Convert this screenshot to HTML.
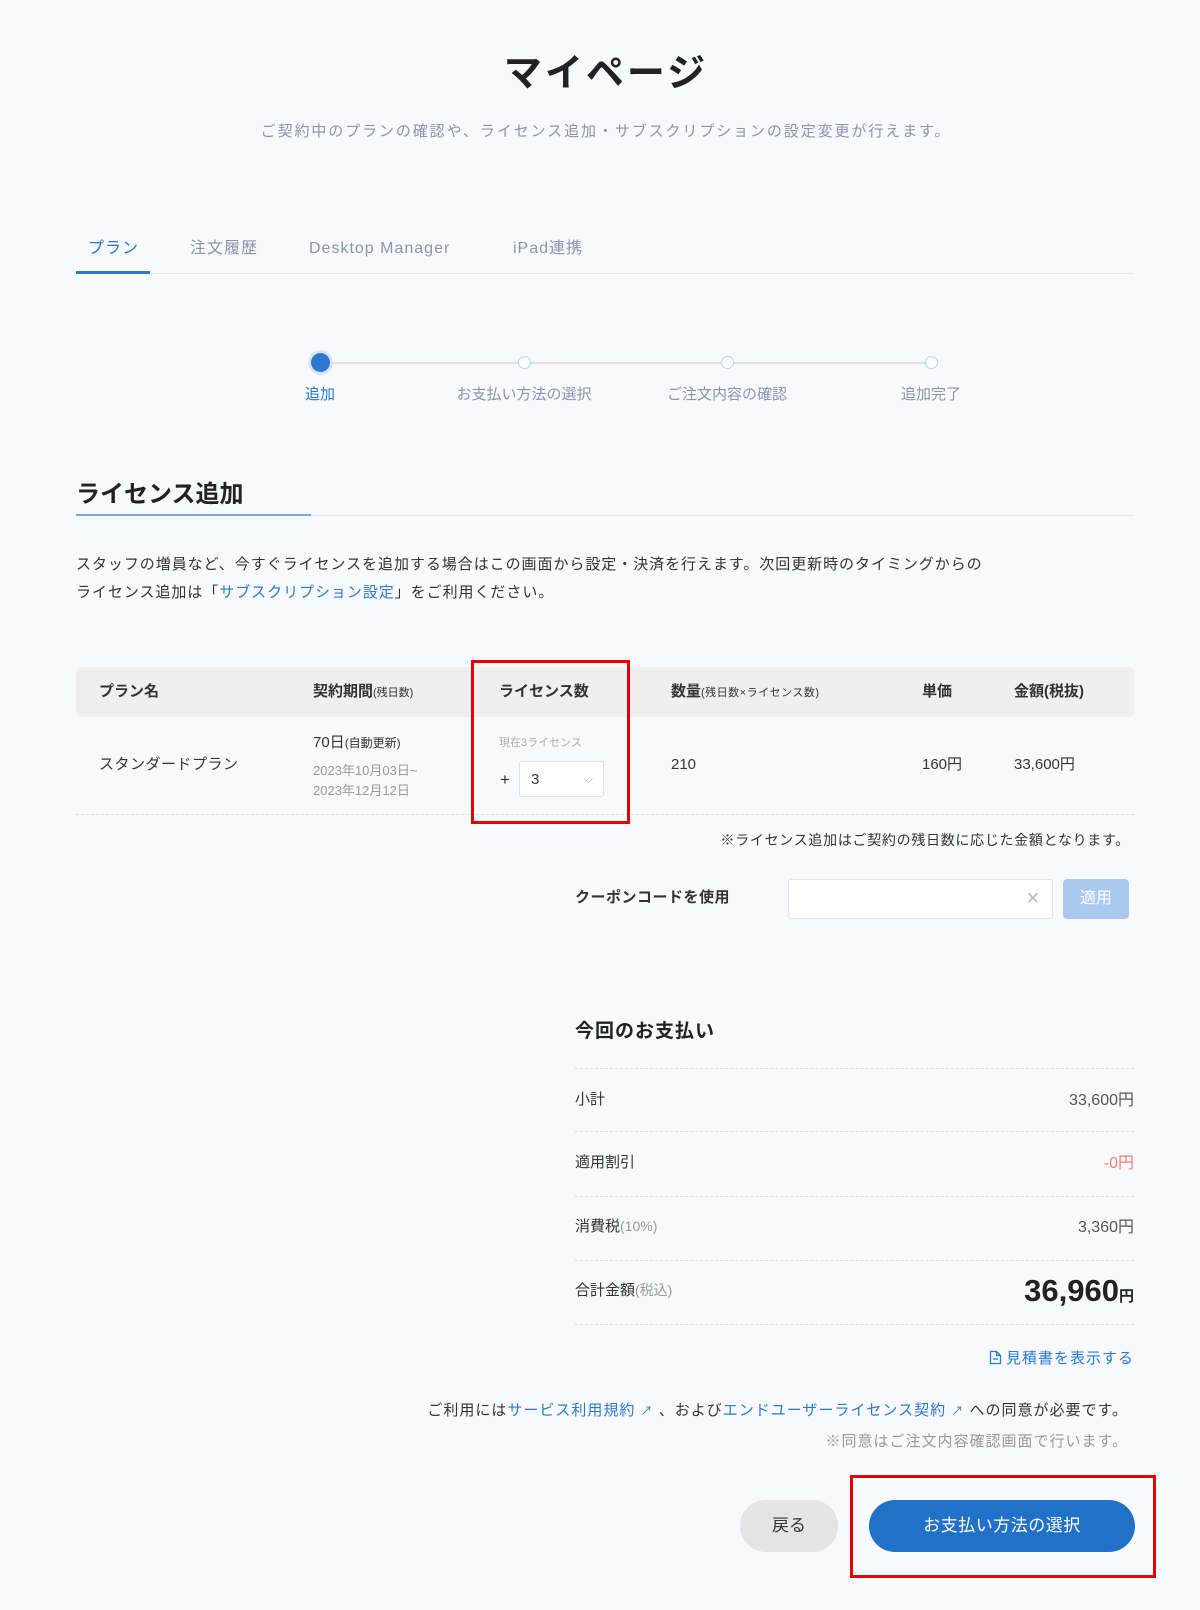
<!DOCTYPE html>
<html><head><meta charset="utf-8"><style>
*{margin:0;padding:0;box-sizing:border-box}
body{width:1200px;height:1610px;background:#f7f9fc;font-family:"Liberation Sans","Noto Sans CJK JP",sans-serif;color:#333;position:relative;overflow:hidden}
.a{position:absolute;white-space:nowrap;line-height:1.62}
.blue{color:#2a78cf}
.dot{position:absolute;border-top:1px dashed #dcdcdc}
</style></head><body>
<div class="a" style="left:0;width:1212px;top:44px;text-align:center;font-size:38px;font-weight:bold;color:#222;letter-spacing:3px">マイページ</div>
<div class="a" style="left:0;width:1212px;top:120px;text-align:center;font-size:15px;color:#8a95a8;letter-spacing:1.9px">ご契約中のプランの確認や、ライセンス追加・サブスクリプションの設定変更が行えます。</div>

<div class="a blue" style="left:88px;top:236px;font-size:16px;letter-spacing:1px">プラン</div>
<div class="a" style="left:190px;top:236px;font-size:16px;color:#8a95a8;letter-spacing:1px">注文履歴</div>
<div class="a" style="left:309px;top:236px;font-size:16px;color:#8a95a8;letter-spacing:1px">Desktop Manager</div>
<div class="a" style="left:513px;top:236px;font-size:16px;color:#8a95a8;letter-spacing:1px">iPad連携</div>
<div class="a" style="left:76px;top:273px;width:1058px;height:1px;background:#e3e7ee"></div>
<div class="a" style="left:76px;top:271px;width:74px;height:3px;background:#2a78cf"></div>

<div class="a" style="left:320px;top:362px;width:611px;height:2px;background:#e0e0e0"></div>
<div class="a" style="left:311px;top:353px;width:19px;height:19px;border-radius:50%;background:#2a78cf;box-shadow:0 0 0 3px #d6e6f7"></div>
<div class="a" style="left:518px;top:356px;width:13px;height:13px;border-radius:50%;background:#fff;border:1.5px solid #b8d2ef"></div>
<div class="a" style="left:721px;top:356px;width:13px;height:13px;border-radius:50%;background:#fff;border:1.5px solid #b8d2ef"></div>
<div class="a" style="left:925px;top:356px;width:13px;height:13px;border-radius:50%;background:#fff;border:1.5px solid #b8d2ef"></div>
<div class="a blue" style="left:280px;width:80px;text-align:center;top:383px;font-size:15px">追加</div>
<div class="a" style="left:444px;width:160px;text-align:center;top:383px;font-size:15px;color:#8a95a8">お支払い方法の選択</div>
<div class="a" style="left:647px;width:160px;text-align:center;top:383px;font-size:15px;color:#8a95a8">ご注文内容の確認</div>
<div class="a" style="left:871px;width:120px;text-align:center;top:383px;font-size:15px;color:#8a95a8">追加完了</div>

<div class="a" style="left:76px;top:476px;font-size:24px;font-weight:bold;color:#222">ライセンス追加</div>
<div class="a" style="left:76px;top:515px;width:1058px;height:1px;background:#e3e7ee"></div>
<div class="a" style="left:76px;top:514px;width:235px;height:2px;background:#7aa9de"></div>
<div class="a" style="left:76px;top:551px;font-size:15px;line-height:28px;color:#333;letter-spacing:0.95px">スタッフの増員など、今すぐライセンスを追加する場合はこの画面から設定・決済を行えます。次回更新時のタイミングからの<br>ライセンス追加は「<span class="blue">サブスクリプション設定</span>」をご利用ください。</div>

<div class="a" style="left:76px;top:667px;width:1058px;height:50px;background:#efefef;border-radius:6px"></div>
<div class="a" style="left:99px;top:680px;font-size:15px;font-weight:bold">プラン名</div>
<div class="a" style="left:313px;top:680px;font-size:15px;font-weight:bold">契約期間<span style="font-size:11px;font-weight:normal">(残日数)</span></div>
<div class="a" style="left:499px;top:680px;font-size:15px;font-weight:bold">ライセンス数</div>
<div class="a" style="left:671px;top:680px;font-size:15px;font-weight:bold">数量<span style="font-size:11px;font-weight:normal;letter-spacing:.5px">(残日数×ライセンス数)</span></div>
<div class="a" style="left:922px;top:680px;font-size:15px;font-weight:bold">単価</div>
<div class="a" style="left:1014px;top:680px;font-size:15px;font-weight:bold">金額(税抜)</div>

<div class="a" style="left:99px;top:753px;font-size:15px;letter-spacing:.5px">スタンダードプラン</div>
<div class="a" style="left:313px;top:731px;font-size:15px">70日<span style="font-size:12px">(自動更新)</span></div>
<div class="a" style="left:313px;top:761px;font-size:13px;color:#999;line-height:20px">2023年10月03日~<br>2023年12月12日</div>
<div class="a" style="left:499px;top:735px;font-size:11px;color:#aaa">現在3ライセンス</div>
<div class="a" style="left:500px;top:766px;font-size:17px">+</div>
<div class="a" style="left:519px;top:761px;width:85px;height:36px;background:#fff;border:1px solid #e0e0e0;border-radius:3px;font-size:15px;line-height:20px;padding:8px 11px">3<span style="position:absolute;right:10px;top:7px;color:#aaa;font-size:12px">⌵</span></div>
<div class="a" style="left:671px;top:753px;font-size:15px">210</div>
<div class="a" style="left:922px;top:753px;font-size:15px">160円</div>
<div class="a" style="left:1014px;top:753px;font-size:15px">33,600円</div>
<div class="dot" style="left:76px;top:814px;width:1058px"></div>
<div class="a" style="left:471px;top:660px;width:159px;height:164px;border:3px solid #e60000"></div>
<div class="a" style="right:70px;top:829px;font-size:14px;letter-spacing:0.7px">※ライセンス追加はご契約の残日数に応じた金額となります。</div>

<div class="a" style="left:575px;top:886px;font-size:15px;font-weight:bold;letter-spacing:.5px">クーポンコードを使用</div>
<div class="a" style="left:788px;top:879px;width:265px;height:40px;background:#fff;border:1px solid #e3e3e3;border-radius:3px;line-height:1.3"><span style="position:absolute;right:12px;top:8px;color:#bbb;font-size:17px">✕</span></div>
<div class="a" style="left:1063px;top:879px;width:66px;height:40px;background:#a9c9ef;border-radius:4px;color:#fff;font-size:16px;text-align:center;line-height:40px">適用</div>

<div class="a" style="left:575px;top:1017px;font-size:19px;font-weight:bold;color:#222;letter-spacing:1px">今回のお支払い</div>
<div class="dot" style="left:575px;top:1068px;width:559px"></div>
<div class="a" style="left:575px;top:1088px;font-size:15px">小計</div>
<div class="a" style="right:66px;top:1088px;font-size:16px;color:#555">33,600円</div>
<div class="dot" style="left:575px;top:1131px;width:559px"></div>
<div class="a" style="left:575px;top:1151px;font-size:15px">適用割引</div>
<div class="a" style="right:66px;top:1151px;font-size:16px;color:#f08070">-0円</div>
<div class="dot" style="left:575px;top:1196px;width:559px"></div>
<div class="a" style="left:575px;top:1215px;font-size:15px">消費税<span style="color:#999;font-size:14px">(10%)</span></div>
<div class="a" style="right:66px;top:1215px;font-size:16px;color:#555">3,360円</div>
<div class="dot" style="left:575px;top:1260px;width:559px"></div>
<div class="a" style="left:575px;top:1279px;font-size:15px">合計金額<span style="color:#999;font-size:14px">(税込)</span></div>
<div class="a" style="right:66px;top:1266px;font-size:31px;font-weight:bold;color:#222">36,960<span style="font-size:15px">円</span></div>
<div class="dot" style="left:575px;top:1324px;width:559px"></div>

<div class="a blue" style="right:66px;top:1347px;font-size:15px;letter-spacing:1px"><svg width="13" height="15" viewBox="0 0 13 15" style="vertical-align:-2px;margin-right:4px"><path d="M1.5 1.5h6l4 4v8h-10z M7.5 1.5v4h4 M4 9h5" fill="none" stroke="#2a78cf" stroke-width="1.3"/></svg>見積書を表示する</div>
<div class="a" style="right:72px;top:1399px;font-size:15px;letter-spacing:1px">ご利用には<span class="blue">サービス利用規約</span> <span class="blue" style="font-size:12px">↗</span> 、および<span class="blue">エンドユーザーライセンス契約</span> <span class="blue" style="font-size:12px">↗</span> への同意が必要です。</div>
<div class="a" style="right:72px;top:1430px;font-size:15px;color:#999;letter-spacing:1px">※同意はご注文内容確認画面で行います。</div>

<div class="a" style="left:740px;top:1500px;width:98px;height:52px;border-radius:26px;background:#e4e4e4;font-size:17px;text-align:center;line-height:52px">戻る</div>
<div class="a" style="left:869px;top:1500px;width:266px;height:52px;border-radius:26px;background:#2171c9;color:#fff;font-size:17px;text-align:center;line-height:52px;letter-spacing:.5px">お支払い方法の選択</div>
<div class="a" style="left:850px;top:1475px;width:306px;height:103px;border:3px solid #e60000"></div>
</body></html>
